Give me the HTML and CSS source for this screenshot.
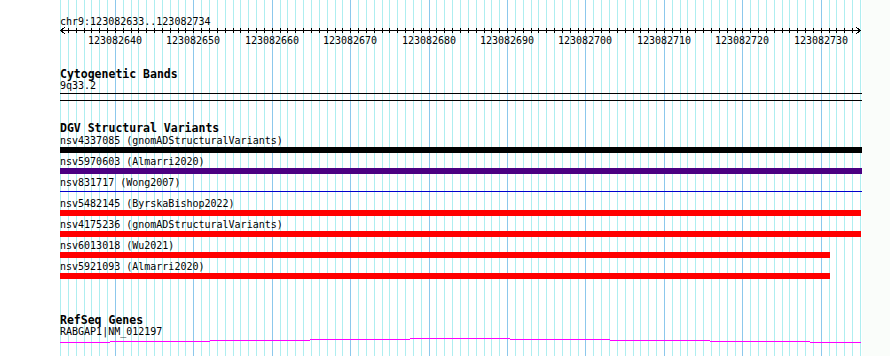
FILE: index.html
```html
<!DOCTYPE html>
<html lang="en">
<head>
  <meta charset="UTF-8" />
  <title>chr9:123082633..123082734</title>
  <link rel="stylesheet" href="styles.css">
</head>
<body>

<div class="view">
  <!-- base grid, drawn by the script below -->
  <svg class="grid" id="grid" width="862" height="356" viewBox="0 0 862 356"></svg>

  <div class="tracks">
    <div class="locus">chr9:123082633..123082734</div>
    <svg class="ruler" id="ruler" width="830" height="20" viewBox="40 27 830 20"></svg>

    <!-- Cytogenetic bands -->
    <section class="track">
      <h2 class="track-title">Cytogenetic Bands</h2>
      <div class="feature-name">9q33.2</div>
      <div class="band"></div>
    </section>

    <!-- DGV -->
    <section class="track">
      <h2 class="track-title">DGV Structural Variants</h2>
      <div class="rows">
        <div class="row">
          <div class="feature-name">nsv4337085 (gnomADStructuralVariants)</div>
          <div class="bar bar-black" style="width:802px"></div>
        </div>
        <div class="row">
          <div class="feature-name">nsv5970603 (Almarri2020)</div>
          <div class="bar bar-purple" style="width:802px"></div>
        </div>
        <div class="row">
          <div class="feature-name">nsv831717 (Wong2007)</div>
          <div class="bar bar-thin" style="width:802px"></div>
        </div>
        <div class="row">
          <div class="feature-name">nsv5482145 (ByrskaBishop2022)</div>
          <div class="bar bar-red" style="width:801px"></div>
        </div>
        <div class="row">
          <div class="feature-name">nsv4175236 (gnomADStructuralVariants)</div>
          <div class="bar bar-red" style="width:801px"></div>
        </div>
        <div class="row">
          <div class="feature-name">nsv6013018 (Wu2021)</div>
          <div class="bar bar-red" style="width:770px"></div>
        </div>
        <div class="row">
          <div class="feature-name">nsv5921093 (Almarri2020)</div>
          <div class="bar bar-red" style="width:770px"></div>
        </div>
      </div>
    </section>

    <!-- RefSeq -->
    <section class="track refseq">
      <h2 class="track-title">RefSeq Genes</h2>
      <div class="feature-name">RABGAP1|NM_012197</div>
      <svg class="gene" width="810" height="6" viewBox="60 340 810 6">
        <rect x="60" y="345" width="50" height="1" />
        <rect x="110" y="344" width="100" height="1" />
        <rect x="210" y="343" width="100" height="1" />
        <rect x="310" y="342" width="100" height="1" />
        <rect x="410" y="341" width="100" height="1" />
        <rect x="510" y="342" width="100" height="1" />
        <rect x="610" y="343" width="100" height="1" />
        <rect x="710" y="344" width="100" height="1" />
        <rect x="810" y="345" width="51" height="1" />
      </svg>
    </section>
  </div>
</div>

<script>
  const NS = 'http://www.w3.org/2000/svg';
  const start = 123082633;
  const bases = 102;
  const step = 800 / bases;

  function xAt(k) {
    return Math.round(60 + k * step) + 0.5;
  }

  function add(parent, tag, attrs, text) {
    const el = document.createElementNS(NS, tag);
    for (const a in attrs) el.setAttribute(a, attrs[a]);
    if (text) el.textContent = text;
    parent.appendChild(el);
    return el;
  }

  const grid = document.getElementById('grid');
  for (let k = 0; k <= bases; k++) {
    const major = (start + k) % 10 === 0;
    add(grid, 'line', {
      x1: xAt(k), x2: xAt(k), y1: 0, y2: 356,
      class: major ? 'grid-major' : 'grid-minor'
    });
  }

  const ruler = document.getElementById('ruler');
  add(ruler, 'line', { x1: 60, x2: 861, y1: 30.5, y2: 30.5, class: 'axis' });
  add(ruler, 'polyline', { points: '65,27 60.5,30.5 65,34', class: 'axis' });
  add(ruler, 'polyline', { points: '856,27 860.5,30.5 856,34', class: 'axis' });
  for (let k = 1; k < bases; k++) {
    add(ruler, 'line', { x1: xAt(k), x2: xAt(k), y1: 28, y2: 33, class: 'axis' });
    if ((start + k) % 10 === 0) {
      add(ruler, 'text', { x: xAt(k) - 0.5, y: 43.5, class: 'tick-label' }, String(start + k));
    }
  }
</script>

</body>
</html>
```

FILE: styles.css
```css
body {
  margin: 0;
  background: #fafdfa;
  font-family: "DejaVu Sans Mono", monospace;
  color: #000;
}
.view {
  position: relative;
  width: 862px;
  height: 356px;
  background: #fff;
  overflow: hidden;
}
.grid {
  position: absolute;
  top: 0;
  left: 0;
  shape-rendering: crispEdges;
}
.grid-minor {
  stroke: #aeeef0;
  stroke-width: 1;
}
.grid-major {
  stroke: #8cc8ec;
  stroke-width: 1;
}
.tracks {
  position: relative;
  padding: 17px 0 0 60px;
}
.locus {
  font-size: 10px;
  line-height: 10px;
  height: 10px;
  white-space: nowrap;
}
.ruler {
  display: block;
  margin-left: -20px;
  shape-rendering: crispEdges;
}
.axis {
  stroke: #000;
  stroke-width: 1;
  fill: none;
}
.tick-label {
  font-family: "DejaVu Sans Mono", monospace;
  font-size: 10px;
  text-anchor: middle;
  fill: #000;
}
.track-title {
  margin: 21px 0 0;
  font-size: 11.5px;
  line-height: 12px;
  font-weight: bold;
  white-space: nowrap;
}
.refseq .track-title {
  margin-top: 35px;
}
.feature-name {
  font-size: 10px;
  line-height: 11px;
  height: 11px;
  white-space: nowrap;
}
.band {
  margin-top: 2px;
  width: 802px;
  height: 6px;
  border-top: 1px solid #000;
  border-bottom: 1px solid #000;
}
.rows {
  margin-top: 1px;
}
.bar {
  height: 6px;
  margin: 1px 0 3px;
}
.bar-black {
  background: #000;
}
.bar-purple {
  background: #4b0082;
}
.bar-red {
  background: #ff0000;
}
.bar-thin {
  height: 1px;
  margin: 3px 0 6px;
  background: #0000cc;
}
.gene {
  display: block;
  shape-rendering: crispEdges;
}
.gene rect {
  fill: #ff00ff;
}
```
